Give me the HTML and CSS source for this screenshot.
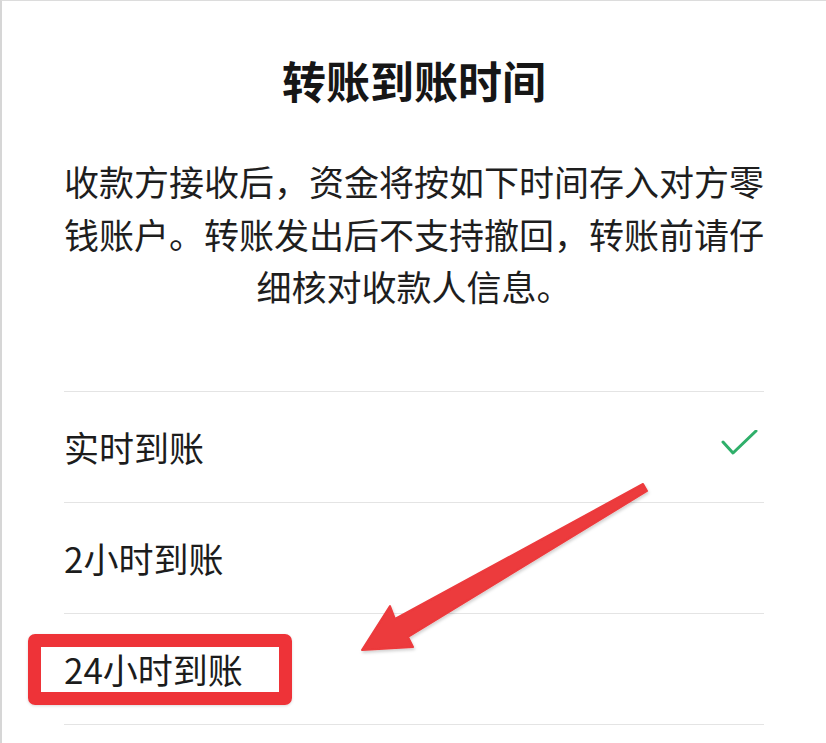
FILE: index.html
```html
<!DOCTYPE html>
<html>
<head>
    <meta charset="utf-8">
    <title>转账到账时间</title>
    <link rel="stylesheet" href="styles.css">
</head>
<body>
<div class="sheet">
    <h1 class="title">转账到账时间</h1>
    <p class="desc">收款方接收后，资金将按如下时间存入对方零钱账户。转账发出后不支持撤回，转账前请仔细核对收款人信息。</p>
    <ul class="options">
        <li class="option">
            <span>实时到账</span>
            <svg class="check" width="40" height="30" viewBox="0 0 40 30">
                <polyline points="3,12 13,23 36,1" fill="none" stroke="#2faf6a" stroke-width="3" stroke-linecap="round" stroke-linejoin="round"/>
            </svg>
        </li>
        <li class="option"><span>2小时到账</span></li>
        <li class="option"><span>24小时到账</span></li>
    </ul>
</div>

<!-- annotations drawn over the screenshot -->
<div class="mark-box"></div>
<svg class="mark-arrow" width="826" height="743" viewBox="0 0 826 743">
    <defs>
        <filter id="shade" x="-10%" y="-10%" width="130%" height="130%">
            <feDropShadow dx="1" dy="2" stdDeviation="1.5" flood-color="#000" flood-opacity="0.18"/>
        </filter>
    </defs>
    <polygon points="362,650 390,606 395,619 643,484 647,491 408,637 413,647"
             fill="#ec3a3c" stroke="#ec3a3c" stroke-width="2" stroke-linejoin="round" filter="url(#shade)"/>
</svg>
</body>
</html>
```

FILE: styles.css
```css
html, body {
    margin: 0;
    padding: 0;
    background: #ffffff;
}
body {
    width: 826px;
    height: 743px;
    overflow: hidden;
    position: relative;
    font-family: "Noto Sans CJK SC", "Noto Sans", sans-serif;
    color: #1c1c1c;
}
.sheet {
    box-sizing: border-box;
    height: 743px;
    padding: 0 62px 0 62px;
    border-top: 1px solid #dcdcdc;
    border-left: 2px solid #d6d6d6;
}
.title {
    margin: 49px 0 0 0;
    font-size: 44px;
    line-height: 60px;
    font-weight: 700;
    text-align: center;
    color: #161616;
}
.desc {
    margin: 45px 0 0 0;
    font-size: 35px;
    line-height: 52.5px;
    text-align: center;
    color: #1e1e1e;
}
.options {
    list-style: none;
    margin: 78px 0 0 0;
    padding: 0;
}
.option {
    display: flex;
    align-items: center;
    justify-content: space-between;
    height: 110px;
    border-top: 1px solid #e4e4e4;
    border-bottom: 0;
    font-size: 35px;
    color: #1c1c1c;
}
.option:last-child {
    border-bottom: 1px solid #e4e4e4;
}
.check {
    margin-right: 4px;
    margin-top: -4px;
}
.mark-box {
    position: absolute;
    left: 28px;
    top: 634px;
    width: 264px;
    height: 71px;
    box-sizing: border-box;
    border: 13px solid #ee3338;
    border-radius: 7px;
    box-shadow: 0 1px 3px rgba(0, 0, 0, 0.15);
}
.mark-arrow {
    position: absolute;
    left: 0;
    top: 0;
}
```
